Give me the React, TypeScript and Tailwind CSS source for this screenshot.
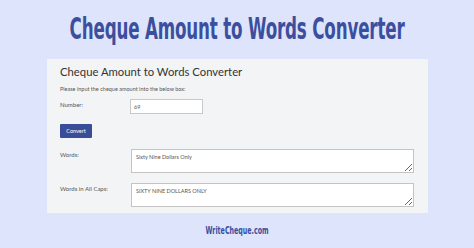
import React from "react";

const panelFont = { fontFamily: 'Lato, "Noto Sans", sans-serif' };
const brandFont = { fontFamily: '"DejaVu Sans Condensed", "DejaVu Sans", sans-serif' };

const App = () => {
	return (
		<div className="w-[474px] h-[248px] bg-[#dee4fb] overflow-hidden flex flex-col">
			<div className="h-[59px] flex items-center justify-center">
				<h1
					className="text-[31px] leading-none font-bold text-[#3b4f9e] whitespace-nowrap scale-x-[0.6] tracking-[-0.3px] -mt-[3px]"
					style={brandFont}
				>
					Cheque Amount to Words Converter
				</h1>
			</div>

			<div className="ml-[47px] w-[381px] h-[154px] bg-[#f3f4f6] px-[13px] pt-[5px]" style={panelFont}>
				<h2 className="text-[11.3px] leading-[16px] text-[#333] whitespace-nowrap">
					Cheque Amount to Words Converter
				</h2>
				<p className="text-[5.5px] leading-[8px] text-[#555] mt-[5px]">
					Please input the cheque amount into the below box:
				</p>

				<div className="flex mt-[6px]">
					<label className="w-[70px] text-[6px] leading-[8px] text-[#555] pt-[2px]">Number:</label>
					<input
						readOnly
						value="69"
						className="w-[73px] h-[15px] bg-white border border-[#c9c9c9] px-[3px] text-[5.5px] text-[#555] outline-none"
					/>
				</div>

				<button className="mt-[10px] w-[32px] h-[14px] bg-[#3a4d98] text-white text-[5.5px] rounded-[1px]">
					Convert
				</button>

				<div className="flex mt-[10px]">
					<label className="w-[71px] text-[6px] leading-[8px] text-[#555] pt-[2px]">Words:</label>
					<textarea
						readOnly
						value="Sixty Nine Dollars Only"
						className="w-[283px] h-[24px] bg-white border border-[#c4c4c4] px-[4px] py-[4px] text-[5.5px] leading-[7px] text-[#555] outline-none"
					/>
				</div>

				<div className="flex mt-[10px]">
					<label className="w-[71px] text-[6px] leading-[8px] text-[#555] pt-[2px]">Words in All Caps:</label>
					<textarea
						readOnly
						value="SIXTY NINE DOLLARS ONLY"
						className="w-[283px] h-[24px] bg-white border border-[#c4c4c4] px-[4px] py-[4px] text-[5.5px] leading-[7px] text-[#555] outline-none"
					/>
				</div>
			</div>

			<div className="flex-1 flex items-center justify-center">
				<span
					className="text-[10px] leading-none font-bold text-[#3b4f9e] scale-x-[0.7] whitespace-nowrap"
					style={brandFont}
				>
					WriteCheque.com
				</span>
			</div>
		</div>
	);
};

export default App;
